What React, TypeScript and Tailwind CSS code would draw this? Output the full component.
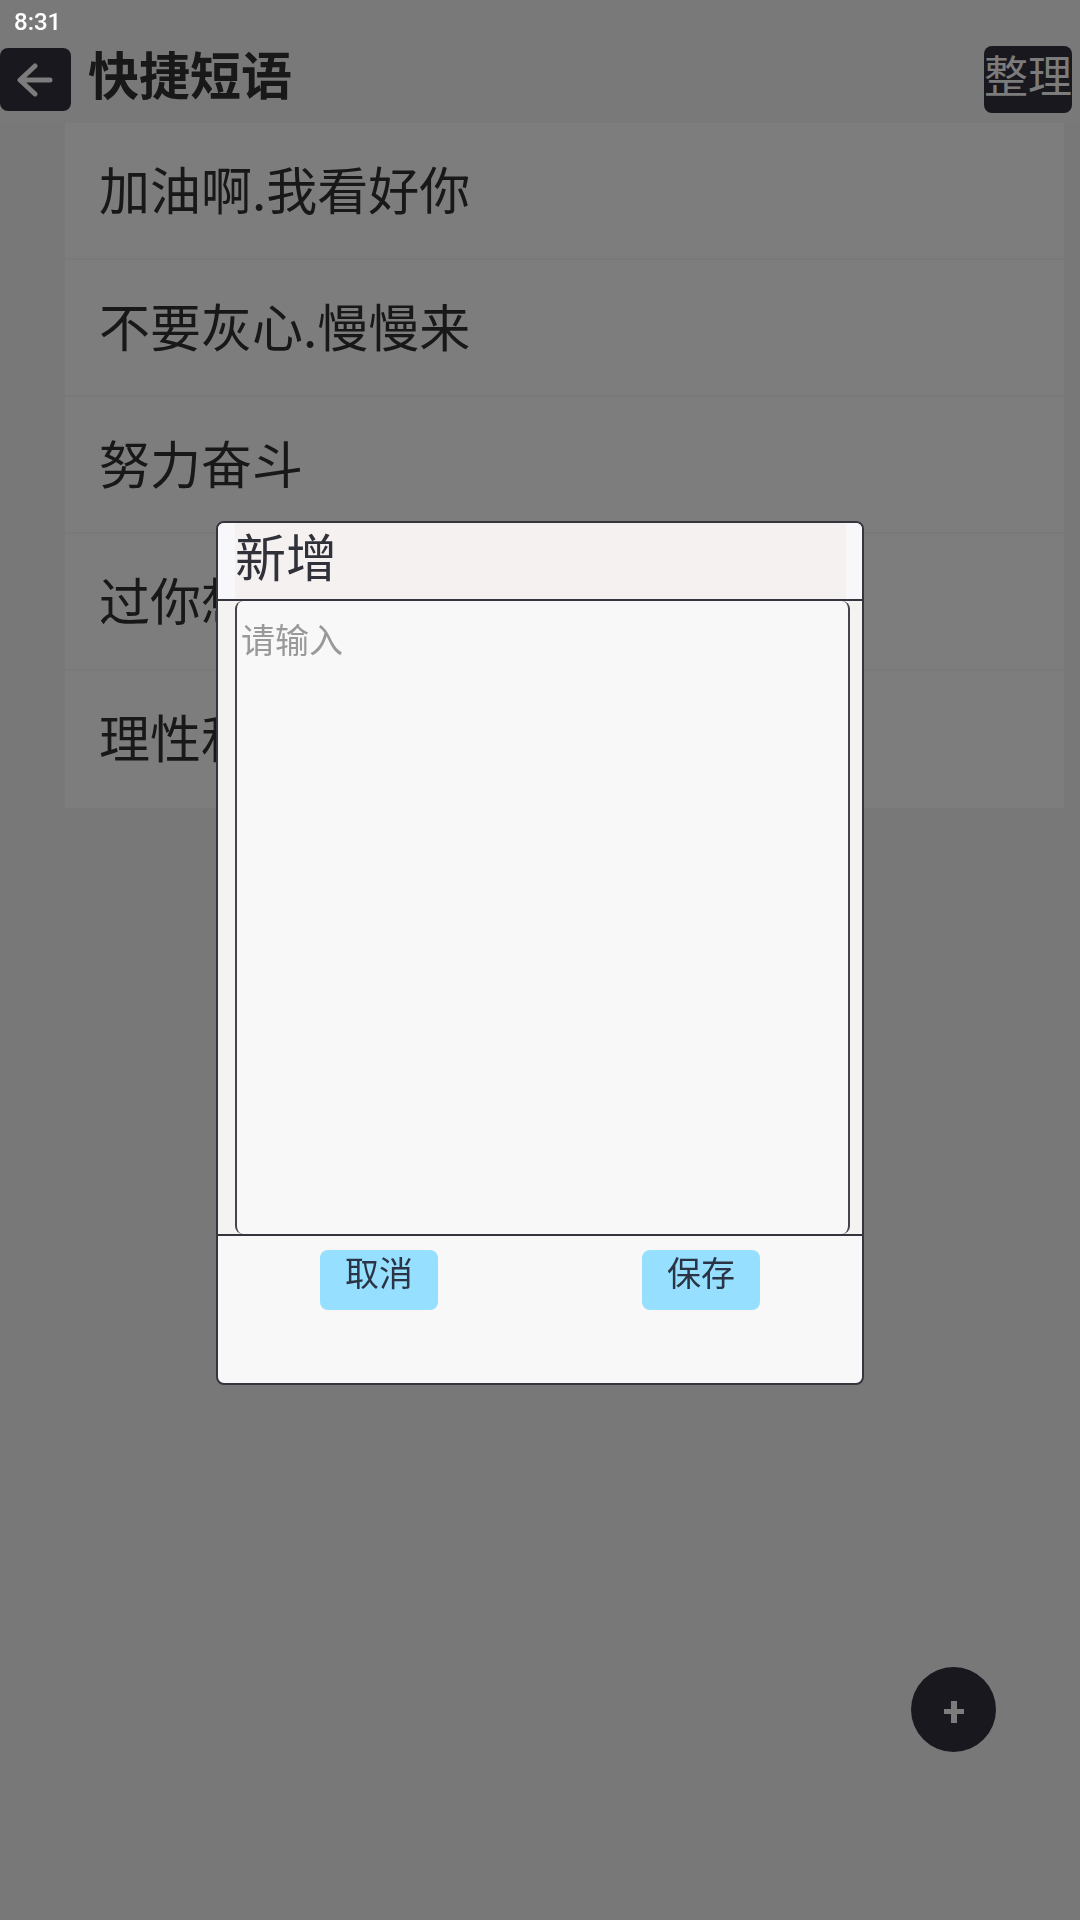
import React from "react";

const phrases = ["加油啊.我看好你", "不要灰心.慢慢来", "努力奋斗", "过你想", "理性和"];

function BackIcon() {
  return (
    <svg width="36" height="34" viewBox="0 0 36 34" fill="none" stroke="currentColor" strokeWidth="5" strokeLinecap="round" strokeLinejoin="round" aria-hidden="true">
      <path d="M33 17H3M18 3L3 17L18 31" />
    </svg>
  );
}

function PlusIcon() {
  return (
    <svg width="20" height="22" viewBox="0 0 20 22" fill="currentColor" aria-hidden="true">
      <path d="M7 0H13V8H20V13H13V22H7V13H0V8H7Z" />
    </svg>
  );
}

function NewPhraseDialog() {
  return (
    <div
      role="dialog"
      aria-labelledby="dialog-title"
      className="flex h-[45vh] w-[60%] flex-col rounded-lg border-2 border-[#34353d] bg-[#f8f8f8]"
    >
      <div className="h-[78px] shrink-0 rounded-t-md border-b-2 border-[#34353d] bg-[#f8f8fb] pr-4 pl-[17px]">
        <h2 id="dialog-title" className="h-full bg-[#f5f1f1] text-[51px] leading-[64px] text-[#303139]">
          新增
        </h2>
      </div>
      <div className="flex flex-1 bg-[#f4f3f2] pr-3 pl-[17px]">
        <textarea
          aria-label="短语内容"
          placeholder="请输入"
          className="w-full resize-none rounded-lg border-x-2 border-[#44454a] bg-[#f8f8f8] px-1 py-[15px] text-[34px] leading-[46px] text-[#303133] outline-none placeholder:text-[#999999]"
        />
      </div>
      <div className="flex h-[149px] shrink-0 items-start justify-around border-t-2 border-[#34353d] pt-[14px]">
        <button type="button" className="h-[60px] w-[118px] rounded-lg bg-[#96dfff] pb-4 text-[34px] leading-[44px] text-[#2b3444]">
          取消
        </button>
        <button type="button" className="h-[60px] w-[118px] rounded-lg bg-[#96dfff] pb-4 text-[34px] leading-[44px] text-[#2b3444]">
          保存
        </button>
      </div>
    </div>
  );
}

export default function App() {
  return (
    <div className="relative flex min-h-screen flex-col bg-[#f1f1f1] font-['Noto_Sans_CJK_SC',sans-serif] text-[#303133]">
      <header className="flex h-[123px] items-center bg-[#f3f3f3] pt-9 pr-2">
        <button type="button" aria-label="返回" className="flex h-[63px] w-[71px] items-center justify-center rounded-lg bg-[#30313d] pr-0.5 text-[#f8f8f8]">
          <BackIcon />
        </button>
        <h1 className="flex-1 pb-[14px] pl-[17px] text-[51px] leading-[70px] font-bold">快捷短语</h1>
        <button type="button" className="h-[67px] w-[88px] rounded-lg bg-[#30313d] pb-2.5 text-[44px] leading-[57px] whitespace-nowrap text-[#f8f8f8]">
          整理
        </button>
      </header>
      <ul className="mr-4 ml-[65px] bg-[#fafafa]">
        {phrases.map((phrase) => (
          <li key={phrase} className="h-[137px] border-b-2 border-[#f0f3f3] pl-[34px] text-[51px] leading-[131px] whitespace-nowrap last:border-transparent">
            {phrase}
          </li>
        ))}
      </ul>
      <button
        type="button"
        aria-label="新增短语"
        className="fixed right-[84px] bottom-[168px] flex size-[85px] items-center justify-center rounded-full bg-[#30313d] pt-1 text-[#f8f8f8]"
      >
        <PlusIcon />
      </button>
      <div className="fixed inset-0 flex items-center justify-center bg-black/50 pb-[14px]">
        <NewPhraseDialog />
      </div>
      <time className="fixed top-0 left-[14px] font-['Roboto',sans-serif] text-2xl leading-[44px] font-medium text-white">8:31</time>
    </div>
  );
}
